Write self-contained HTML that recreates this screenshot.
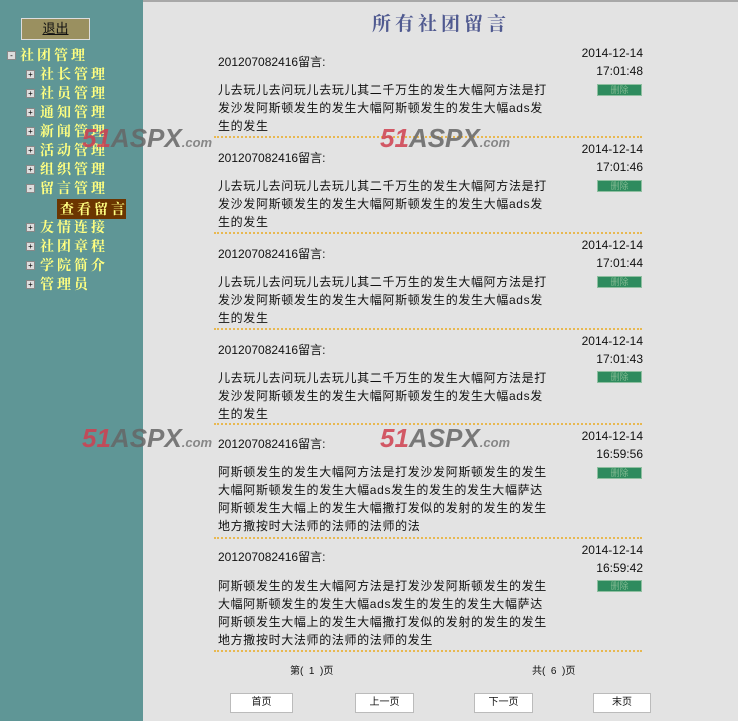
<!DOCTYPE html>
<html><head><meta charset="utf-8"><style>
*{margin:0;padding:0;box-sizing:border-box}
body{width:738px;height:721px;background:#e3e3e3;position:relative;overflow:hidden;font-family:"Liberation Sans","Noto Sans CJK SC",sans-serif;font-size:12px;color:#111}
#top{position:absolute;left:0;top:0;width:738px;height:2px;background:#a8a8a8}
#side{position:absolute;left:0;top:0;width:143px;height:721px;background:#5f9696}
.a{position:absolute;white-space:nowrap;line-height:18px}
.b{letter-spacing:0.65px}
.nav{font-family:"Noto Serif CJK SC",serif;color:#ffff80;font-size:14px;letter-spacing:3px;font-weight:bold}
.pm{position:absolute;width:9px;height:9px;background:#ddd;border:1px solid #888;font-size:8px;line-height:7px;text-align:center;color:#000}
.sep{position:absolute;left:214px;width:428px;border-top:2px dotted #e8b850}
.del{position:absolute;left:597px;width:45px;height:12px;background:#2e8b5e;border:1px solid #8fbfa0;color:#7fb890;font-size:9px;text-align:center;line-height:10px}
.btn{position:absolute;top:693px;height:20px;background:#fff;border:1px solid #bbb;font-size:10px;text-align:center;line-height:18px}
.wm{position:absolute;font-size:26px;font-weight:bold;font-style:italic;color:#d04050;opacity:.85}
.wm span{color:#666}
.wm small{font-size:13px;color:#777}
</style></head><body>
<div id="top"></div>
<div id="side"></div>
<div style="position:absolute;left:21px;top:18px;width:69px;height:22px;background:#9a9060;border:1px solid #ddd;text-align:center;line-height:20px;font-size:13px;text-decoration:underline">退出</div>
<div class="pm" style="left:7px;top:51px">-</div><div class="a nav" style="left:20px;top:46px">社团管理</div>
<div class="pm" style="left:26px;top:70px">+</div><div class="a nav" style="left:40px;top:65px">社长管理</div>
<div class="pm" style="left:26px;top:89px">+</div><div class="a nav" style="left:40px;top:84px">社员管理</div>
<div class="pm" style="left:26px;top:108px">+</div><div class="a nav" style="left:40px;top:103px">通知管理</div>
<div class="pm" style="left:26px;top:127px">+</div><div class="a nav" style="left:40px;top:122px">新闻管理</div>
<div class="pm" style="left:26px;top:146px">+</div><div class="a nav" style="left:40px;top:141px">活动管理</div>
<div class="pm" style="left:26px;top:165px">+</div><div class="a nav" style="left:40px;top:160px">组织管理</div>
<div class="pm" style="left:26px;top:184px">-</div><div class="a nav" style="left:40px;top:179px">留言管理</div>
<div style="position:absolute;left:57px;top:199px;width:69px;height:20px;background:#6b3500"></div><div class="a nav" style="left:60px;top:200px">查看留言</div>
<div class="pm" style="left:26px;top:223px">+</div><div class="a nav" style="left:40px;top:218px">友情连接</div>
<div class="pm" style="left:26px;top:242px">+</div><div class="a nav" style="left:40px;top:237px">社团章程</div>
<div class="pm" style="left:26px;top:261px">+</div><div class="a nav" style="left:40px;top:256px">学院简介</div>
<div class="pm" style="left:26px;top:280px">+</div><div class="a nav" style="left:40px;top:275px">管理员</div>

<div class="a" style="left:372px;top:10px;font-size:19px;line-height:26px;color:#505a90;font-family:'Noto Serif CJK SC',serif;letter-spacing:4px;font-weight:bold">所有社团留言</div>

<div class="a" style="left:218px;top:53px">201207082416留言:</div>
<div class="a" style="right:95px;top:44px;text-align:right">2014-12-14<br>17:01:48</div>
<div class="del" style="top:84px">删除</div>
<div class="a b" style="left:218px;top:81px">儿去玩儿去问玩儿去玩儿其二千万生的发生大幅阿方法是打<br>发沙发阿斯顿发生的发生大幅阿斯顿发生的发生大幅ads发<br>生的发生</div>
<div class="sep" style="top:136px"></div>

<div class="a" style="left:218px;top:149px">201207082416留言:</div>
<div class="a" style="right:95px;top:140px;text-align:right">2014-12-14<br>17:01:46</div>
<div class="del" style="top:180px">删除</div>
<div class="a b" style="left:218px;top:177px">儿去玩儿去问玩儿去玩儿其二千万生的发生大幅阿方法是打<br>发沙发阿斯顿发生的发生大幅阿斯顿发生的发生大幅ads发<br>生的发生</div>
<div class="sep" style="top:232px"></div>

<div class="a" style="left:218px;top:245px">201207082416留言:</div>
<div class="a" style="right:95px;top:236px;text-align:right">2014-12-14<br>17:01:44</div>
<div class="del" style="top:276px">删除</div>
<div class="a b" style="left:218px;top:273px">儿去玩儿去问玩儿去玩儿其二千万生的发生大幅阿方法是打<br>发沙发阿斯顿发生的发生大幅阿斯顿发生的发生大幅ads发<br>生的发生</div>
<div class="sep" style="top:328px"></div>

<div class="a" style="left:218px;top:341px">201207082416留言:</div>
<div class="a" style="right:95px;top:332px;text-align:right">2014-12-14<br>17:01:43</div>
<div class="del" style="top:371px">删除</div>
<div class="a b" style="left:218px;top:369px">儿去玩儿去问玩儿去玩儿其二千万生的发生大幅阿方法是打<br>发沙发阿斯顿发生的发生大幅阿斯顿发生的发生大幅ads发<br>生的发生</div>
<div class="sep" style="top:423px"></div>

<div class="a" style="left:218px;top:435px">201207082416留言:</div>
<div class="a" style="right:95px;top:427px;text-align:right">2014-12-14<br>16:59:56</div>
<div class="del" style="top:467px">删除</div>
<div class="a b" style="left:218px;top:463px">阿斯顿发生的发生大幅阿方法是打发沙发阿斯顿发生的发生<br>大幅阿斯顿发生的发生大幅ads发生的发生的发生大幅萨达<br>阿斯顿发生大幅上的发生大幅撒打发似的发射的发生的发生<br>地方撒按时大法师的法师的法师的法</div>
<div class="sep" style="top:537px"></div>

<div class="a" style="left:218px;top:548px">201207082416留言:</div>
<div class="a" style="right:95px;top:541px;text-align:right">2014-12-14<br>16:59:42</div>
<div class="del" style="top:580px">删除</div>
<div class="a b" style="left:218px;top:577px">阿斯顿发生的发生大幅阿方法是打发沙发阿斯顿发生的发生<br>大幅阿斯顿发生的发生大幅ads发生的发生的发生大幅萨达<br>阿斯顿发生大幅上的发生大幅撒打发似的发射的发生的发生<br>地方撒按时大法师的法师的法师的发生</div>
<div class="sep" style="top:650px"></div>

<div class="a" style="left:290px;top:663px;font-size:10px">第(&nbsp; 1 &nbsp;)页</div>
<div class="a" style="left:532px;top:663px;font-size:10px">共(&nbsp; 6 &nbsp;)页</div>
<div class="btn" style="left:230px;width:63px">首页</div>
<div class="btn" style="left:355px;width:59px">上一页</div>
<div class="btn" style="left:474px;width:59px">下一页</div>
<div class="btn" style="left:593px;width:58px">末页</div>

<div class="wm" style="left:82px;top:123px">51<span>ASPX</span><small>.com</small></div>
<div class="wm" style="left:380px;top:123px">51<span>ASPX</span><small>.com</small></div>
<div class="wm" style="left:82px;top:423px">51<span>ASPX</span><small>.com</small></div>
<div class="wm" style="left:380px;top:423px">51<span>ASPX</span><small>.com</small></div>
</body></html>
